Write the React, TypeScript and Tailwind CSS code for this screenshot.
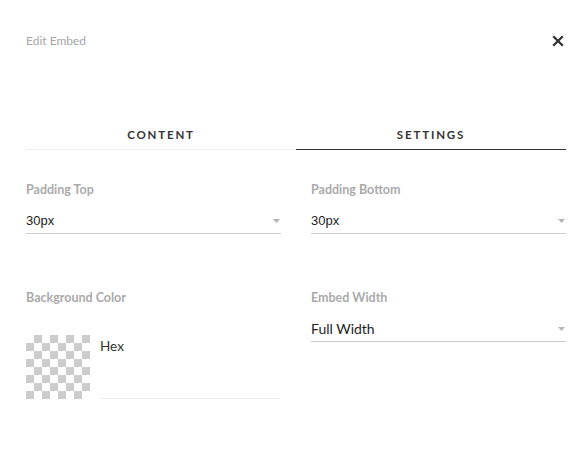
const checker = Array.from({ length: 64 }, (_, i) => {
  const row = Math.floor(i / 8);
  const col = i % 8;
  return (row + col) % 2 === 1;
});

function Caret() {
  return (
    <svg width="7" height="4" viewBox="0 0 7 4" className="shrink-0">
      <path d="M0 0 H7 L3.5 4 Z" fill="#b5b5b5" />
    </svg>
  );
}

function SelectField({ label, value, mono }: { label: string; value: string; mono?: boolean }) {
  return (
    <div>
      <p className="text-[12.5px] font-bold leading-[14px] text-[#aaaaaa]">{label}</p>
      <div className="mt-[11px] flex h-[26px] items-center justify-between border-b border-[#cccccc] pr-[1px]">
        <span
          className={
            mono
              ? "font-['Liberation_Sans',sans-serif] text-[13px] text-[#222222]"
              : "text-[14px] text-[#222222]"
          }
        >
          {value}
        </span>
        <Caret />
      </div>
    </div>
  );
}

export default function App() {
  return (
    <div className="h-[475px] w-[588px] bg-white pl-[26px] pr-[22px] font-['Lato',sans-serif]">
      <div className="flex h-[82px] items-center justify-between">
        <p className="text-[12px] text-[#a6a6a6]">Edit Embed</p>
        <svg width="12" height="12" viewBox="0 0 12 12" className="mr-[2px]">
          <path d="M1.2 1.2 L10.8 10.8 M10.8 1.2 L1.2 10.8" stroke="#333333" strokeWidth="2.3" />
        </svg>
      </div>

      <div className="mt-[38px] grid grid-cols-2">
        <div className="flex h-[30px] items-center justify-center border-b border-[#eeeeee]">
          <span className="text-[11.5px] font-bold tracking-[0.16em] text-[#333333]">CONTENT</span>
        </div>
        <div className="flex h-[30px] items-center justify-center border-b border-[#333333]">
          <span className="text-[11.5px] font-bold tracking-[0.16em] text-[#333333]">SETTINGS</span>
        </div>
      </div>

      <div className="mt-[33px] grid grid-cols-2 gap-x-[30px] gap-y-[57px]">
        <SelectField label="Padding Top" value="30px" mono />
        <SelectField label="Padding Bottom" value="30px" mono />

        <div>
          <p className="text-[12.5px] font-bold leading-[14px] text-[#aaaaaa]">Background Color</p>
          <div className="mt-[30px] flex gap-[10px]">
            <div className="grid h-[64px] w-[64px] shrink-0 grid-cols-8">
              {checker.map((gray, i) => (
                <div key={i} className={gray ? "bg-[#cccccc]" : "bg-white"} />
              ))}
            </div>
            <div className="flex w-[180px] flex-col justify-between border-b border-[#eeeeee]">
              <span className="text-[13.5px] leading-[22px] text-[#333333]">Hex</span>
            </div>
          </div>
        </div>
        <SelectField label="Embed Width" value="Full Width" />
      </div>
    </div>
  );
}
